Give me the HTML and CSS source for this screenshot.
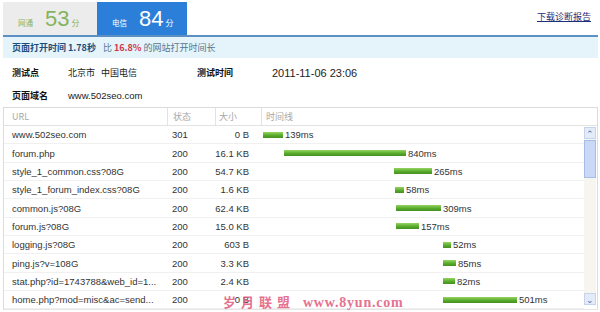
FILE: index.html
```html
<!DOCTYPE html>
<html lang="zh-CN">
<head>
    <meta charset="UTF-8">
    <title>测速结果</title>
    <link rel="stylesheet" href="styles.css">
</head>
<body>
    <div class="page">
        <div class="head">
            <div class="tabs">
                <div class="tab"><span class="tab-name">网通</span><span class="score">53</span><span class="unit">分</span></div>
                <div class="tab active"><span class="tab-name">电信</span><span class="score">84</span><span class="unit">分</span></div>
            </div>
            <a class="download" href="#">下载诊断报告</a>
        </div>

        <div class="summary">
            <b>页面打开时间 1.78秒</b>
            <span class="cmp">比 <em>16.8%</em> 的网站打开时间长</span>
        </div>

        <div class="meta">
            <div class="meta-row">
                <span class="label">测试点</span>
                <span class="val">北京市&nbsp;&nbsp;&nbsp;中国电信</span>
                <span class="label label-2">测试时间</span>
                <span class="val val-date">2011-11-06 23:06</span>
            </div>
            <div class="meta-row">
                <span class="label">页面域名</span>
                <span class="val val-domain">www.502seo.com</span>
            </div>
        </div>

        <div class="grid">
            <div class="row thead">
                <div class="c-url">URL</div>
                <div class="c-status">状态</div>
                <div class="c-size">大小</div>
                <div class="c-time">时间线</div>
            </div>
            <div class="body">
                <div class="rows">
                    <div class="row"><div class="c-url">www.502seo.com</div><div class="c-status">301</div><div class="c-size">0 B</div><div class="c-time"><i class="bar" style="margin-left:3px;width:20px"></i>139ms</div></div>
                    <div class="row"><div class="c-url">forum.php</div><div class="c-status">200</div><div class="c-size">16.1 KB</div><div class="c-time"><i class="bar" style="margin-left:24px;width:122px"></i>840ms</div></div>
                    <div class="row"><div class="c-url">style_1_common.css?08G</div><div class="c-status">200</div><div class="c-size">54.7 KB</div><div class="c-time"><i class="bar" style="margin-left:134px;width:38px"></i>265ms</div></div>
                    <div class="row"><div class="c-url">style_1_forum_index.css?08G</div><div class="c-status">200</div><div class="c-size">1.6 KB</div><div class="c-time"><i class="bar" style="margin-left:135px;width:9px"></i>58ms</div></div>
                    <div class="row"><div class="c-url">common.js?08G</div><div class="c-status">200</div><div class="c-size">62.4 KB</div><div class="c-time"><i class="bar" style="margin-left:136px;width:45px"></i>309ms</div></div>
                    <div class="row"><div class="c-url">forum.js?08G</div><div class="c-status">200</div><div class="c-size">15.0 KB</div><div class="c-time"><i class="bar" style="margin-left:136px;width:23px"></i>157ms</div></div>
                    <div class="row"><div class="c-url">logging.js?08G</div><div class="c-status">200</div><div class="c-size">603 B</div><div class="c-time"><i class="bar" style="margin-left:183px;width:8px"></i>52ms</div></div>
                    <div class="row"><div class="c-url">ping.js?v=108G</div><div class="c-status">200</div><div class="c-size">3.3 KB</div><div class="c-time"><i class="bar" style="margin-left:183px;width:13px"></i>85ms</div></div>
                    <div class="row"><div class="c-url">stat.php?id=1743788&amp;web_id=1...</div><div class="c-status">200</div><div class="c-size">2.4 KB</div><div class="c-time"><i class="bar" style="margin-left:183px;width:12px"></i>82ms</div></div>
                    <div class="row"><div class="c-url">home.php?mod=misc&amp;ac=send...</div><div class="c-status">200</div><div class="c-size">0 B</div><div class="c-time"><i class="bar" style="margin-left:183px;width:74px"></i>501ms</div></div>
                </div>
                <div class="scrollbar">
                    <div class="sb-btn">&#8963;</div>
                    <div class="sb-thumb"></div>
                    <div class="sb-track"></div>
                    <div class="sb-btn">&#8964;</div>
                </div>
            </div>
        </div>

        <div class="watermark">岁月联盟 <span>www.8yun.com</span></div>
    </div>
</body>
</html>
```

FILE: styles.css
```css
body {
    margin: 0;
    background: #fff;
    font-family: "Liberation Sans", "Noto Sans CJK SC", Arial, sans-serif;
    font-size: 11px;
    color: #333;
}

.page {
    position: relative;
    width: 595px;
    margin-left: 3px;
    height: 312px;
    overflow: hidden;
}

/* tabs + link */
.head {
    display: flex;
    justify-content: space-between;
    align-items: flex-start;
    height: 35px;
    border-bottom: 2px solid #5c8fc2;
}

.tabs {
    display: flex;
    margin-top: 2px;
}

.tab {
    display: flex;
    align-items: baseline;
    height: 33px;
    box-sizing: border-box;
    padding: 4px 0 0 15px;
    width: 94px;
    background: #ececec;
    color: #86b35e;
    font-family: "Noto Sans CJK SC", sans-serif;
}

.tab.active {
    width: 90px;
    background: #2c7fd8;
    color: #fff;
}

.tab-name {
    font-size: 7.5px;
    width: 27px;
}

.score {
    font-family: "Liberation Sans", sans-serif;
    font-size: 22px;
    line-height: 26px;
    margin-right: 2px;
}

.unit {
    font-size: 8px;
}

.download {
    margin: 10px 7px 0 0;
    color: #1b2f7a;
    font-size: 9px;
    font-family: "Noto Sans CJK SC", sans-serif;
}

/* summary bar */
.summary {
    display: flex;
    align-items: center;
    gap: 7px;
    height: 21px;
    padding-left: 9px;
    background: #e4f4fa;
    font-family: "Noto Sans CJK SC", sans-serif;
    font-size: 9px;
}

.summary b {
    color: #1d4d7c;
}

.cmp {
    color: #557590;
}

.cmp em {
    font-style: normal;
    font-weight: bold;
    color: #d3344a;
}

/* test info */
.meta {
    padding: 3px 0 0 9px;
}

.meta-row {
    display: flex;
    align-items: center;
    height: 23px;
}

.label {
    width: 56px;
    font-weight: bold;
    color: #111;
    font-family: "Noto Sans CJK SC", sans-serif;
    font-size: 9px;
}

.label-2 {
    width: 75px;
}

.val {
    width: 129px;
    color: #222;
    font-family: "Noto Sans CJK SC", sans-serif;
    font-size: 9px;
}

.val-date {
    font-family: "Liberation Sans", sans-serif;
    font-size: 11px;
}

.val-domain {
    font-family: "Liberation Sans", sans-serif;
    font-size: 9.5px;
}

/* request table */
.grid {
    border: 1px solid #dcdcdc;
    border-bottom-color: #e6e6e6;
}

.row {
    display: flex;
    align-items: center;
    height: 18.35px;
    box-sizing: border-box;
    border-bottom: 1px solid #f0f0f0;
    color: #333;
    font-size: 9.5px;
    white-space: nowrap;
}

.thead {
    height: 18px;
    border-bottom: 1px solid #e2e2e2;
    color: #a8a8a8;
    font-family: "Noto Sans CJK SC", sans-serif;
    font-size: 9px;
}

.thead > div {
    height: 100%;
    display: flex;
    align-items: center;
    border-right: 1px solid #e2e2e2;
}

.thead > div:last-child {
    border-right: none;
}

.c-url {
    width: 155px;
    padding-left: 8px;
}

.c-status {
    width: 42px;
    padding-left: 5px;
}

.c-size {
    width: 35px;
    padding-right: 11px;
    justify-content: flex-end;
    text-align: right;
}

.thead .c-size {
    justify-content: flex-start;
    padding-left: 3px;
    width: 42px;
    padding-right: 0;
}

.c-time {
    flex: 1;
    display: flex;
    align-items: center;
}

.thead .c-time {
    padding-left: 4px;
}

.body {
    display: flex;
}

.rows {
    flex: 1;
}

.bar {
    display: inline-block;
    height: 6px;
    margin-right: 2px;
    background: linear-gradient(#94d460, #56a82a 60%, #458f20);
}

.scrollbar {
    display: flex;
    flex-direction: column;
    width: 12px;
    margin: 1px 1px 4px 0;
    background: #f6f5ef;
}

.sb-btn {
    height: 12px;
    box-sizing: border-box;
    border: 1px solid #c5d3ec;
    background: #e3ebf8;
    color: #4a6fb0;
    font-size: 9px;
    line-height: 12px;
    text-align: center;
}

.sb-thumb {
    height: 38px;
    margin-top: 1px;
    box-sizing: border-box;
    border: 1px solid #a8bde6;
    background: #c8d8f6;
}

.sb-track {
    flex: 1;
}

/* overlay watermark from screenshot source */
.watermark {
    position: absolute;
    left: 220px;
    top: 292px;
    color: #e25a7c;
    opacity: 0.85;
    font-family: "Noto Sans CJK SC", serif;
    font-weight: bold;
    font-size: 13px;
    letter-spacing: 5px;
}

.watermark span {
    font-family: "Liberation Serif", serif;
    font-size: 14px;
    letter-spacing: 0.8px;
    margin-left: 0;
}
```
